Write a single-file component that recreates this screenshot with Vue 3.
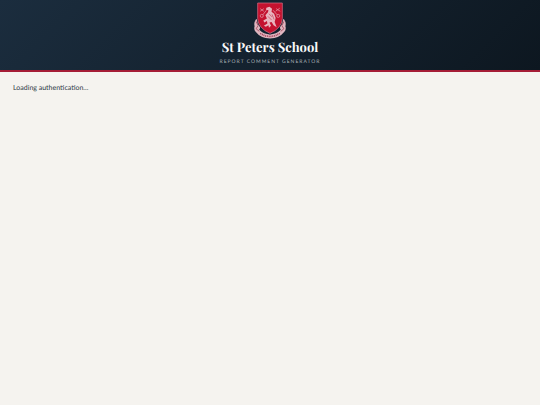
<template>
  <div class="app">
    <header class="header">
      <svg class="crest" viewBox="0 0 64 72" role="img" aria-label="School crest">
        <!-- ribbon -->
        <path d="M5 33 Q0 40 2 47 Q0 53 4 58 Q14 71 32 71 Q50 71 60 58 Q64 53 62 47 Q64 40 59 33 L53 35 L56 42 L50 48 L53 54 Q44 63 32 63 Q20 63 11 54 L14 48 L8 42 L11 35 Z" fill="#dfb5bf" />
        <path d="M5 38 L9 46 L5 52 L11 57 M59 38 L55 46 L59 52 L53 57" fill="none" stroke="#9d3b51" stroke-width="1.5" />
        <path d="M13 61 Q32 73 51 61" fill="none" stroke="#a53e56" stroke-width="3" stroke-dasharray="2 1.5" />
        <!-- shield -->
        <path d="M8 2 H56 V32 Q55 51 32 61 Q9 51 8 32 Z" fill="#c4122f" stroke="#172334" stroke-width="4" />
        <path d="M8 2 H56 V32 Q55 51 32 61 Q9 51 8 32 Z" fill="#c4122f" stroke="#c9677c" stroke-width="1.5" />
        <!-- keys -->
        <g fill="none" stroke="#e08c9c" stroke-width="1.6">
          <circle cx="16" cy="27" r="3" />
          <circle cx="48" cy="27" r="3" />
          <path d="M18 25 L25 16 M13 13 L20 18 M13 18 L20 13 M46 25 L38 16 M43 18 L51 12 M44 13 L52 18" />
        </g>
        <!-- eagle -->
        <path d="M25 11 L31 9 L36 13 L35 19 L40 23 L43 31 L41 39 L45 49 L39 45 L35 39 L31 40 L34 46 L30 50 L29 45 L24 48 L20 46 L27 42 L26 37 L21 40 L19 36 L26 32 L23 26 L28 20 L29 16 L24 15 Z" fill="#e8b4be" />
        <path d="M30 23 L36 29 M28 28 L35 35 M36 24 L40 34" fill="none" stroke="#c94d64" stroke-width="1.5" />
      </svg>
      <h1 class="title">St Peters School</h1>
      <p class="subtitle">Report Comment Generator</p>
    </header>
    <main class="content">
      <p class="status">{{ status }}</p>
    </main>
  </div>
</template>

<script setup>
import { ref } from 'vue'

const status = ref('Loading authentication...')
</script>

<style>
body {
  margin: 0;
  background: #f5f3ef;
}
</style>

<style scoped>
.app {
  min-height: 100vh;
  background: #f5f3ef;
  color: #2c3845;
  font-family: Lato, 'Liberation Sans', sans-serif;
  text-rendering: geometricPrecision;
}

.header {
  display: flex;
  flex-direction: column;
  align-items: center;
  padding: 2px 16px;
  background: linear-gradient(135deg, #1b2d3e 0%, #0d1720 100%);
  border-bottom: 2px solid #a51c36;
  text-align: center;
}

.crest {
  display: block;
  width: 34px;
  height: 37px;
}

.title {
  margin: 0;
  color: #f8f8f8;
  font-family: 'Playfair Display', 'Liberation Serif', serif;
  font-size: 13px;
  font-weight: 700;
  line-height: 18px;
}

.subtitle {
  margin: 0;
  color: #a8afb5;
  font-size: 5px;
  line-height: 11px;
  letter-spacing: 1px;
  text-transform: uppercase;
}

.content {
  padding: 10px 13px;
}

.status {
  margin: 0;
  font-size: 7px;
  line-height: 12px;
}
</style>
